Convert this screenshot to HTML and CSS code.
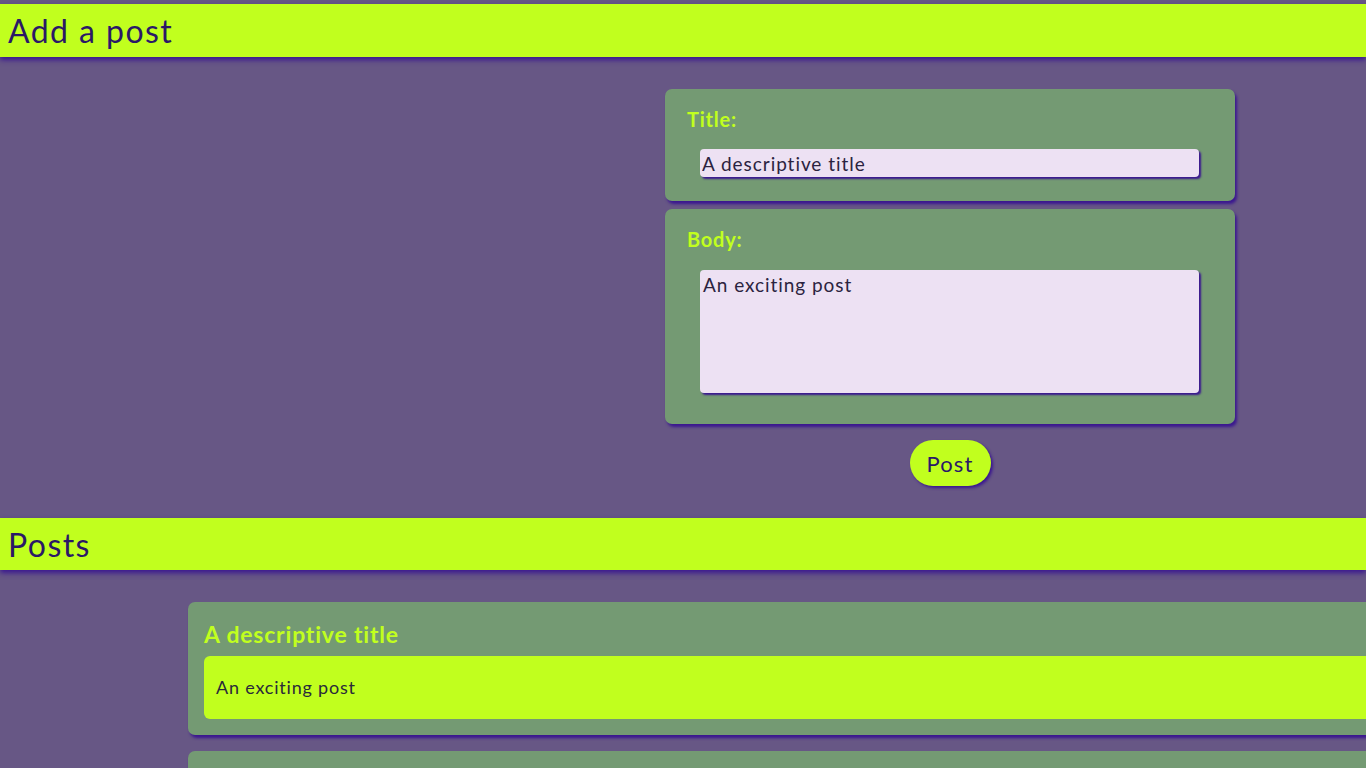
FILE: index.html
```html
<!DOCTYPE html>
<html lang="en">
<head>
<meta charset="utf-8">
<title>Posts</title>
<link rel="stylesheet" href="styles.css">
</head>
<body>
<header class="bar bar-first"><h1 class="bar-title">Add a post</h1></header>
<main>
  <form class="post-form">
    <div class="field-card">
      <label class="field-label" for="title">Title:</label>
      <input class="field-input" id="title" type="text" value="A descriptive title">
    </div>
    <div class="field-card field-card-body">
      <label class="field-label" for="body">Body:</label>
      <textarea class="field-textarea" id="body">An exciting post</textarea>
    </div>
    <div class="actions"><button class="post-btn" type="button">Post</button></div>
  </form>
  <header class="bar bar-posts"><h1 class="bar-title">Posts</h1></header>
  <section class="posts">
    <article class="post-card">
      <h2 class="post-title">A descriptive title</h2>
      <div class="post-body">An exciting post</div>
    </article>
    <article class="post-card">
      <h2 class="post-title">A descriptive title</h2>
      <div class="post-body">An exciting post</div>
    </article>
  </section>
</main>
</body>
</html>
```
FILE: styles.css
```css
html, body {
  margin: 0;
  padding: 0;
  overflow: hidden;
}
body {
  background: #675785;
  font-family: "Lato", "Open Sans", sans-serif;
  letter-spacing: 0.05em;
  color: #2b1867;
}
.bar {
  background: #c1ff1e;
  height: 53px;
  display: flex;
  align-items: center;
  padding-left: 8px;
  box-shadow: 0 3px 5px #3a1790;
}
.bar-first { margin-top: 4px; }
.bar-posts { height: 52px; }
.bar-title {
  margin: 0;
  font-size: 32px;
  font-weight: 400;
  letter-spacing: 0.045em;
  color: #2b1867;
}
.post-form {
  margin: 32px 0 32px 665px;
  width: 570px;
}
.field-card {
  background: #749a73;
  border-radius: 7px;
  padding: 18px 22px 24px;
  box-shadow: 2px 3px 3px #3a1790;
}
.field-card-body {
  margin-top: 8px;
  padding-bottom: 31px;
}
.field-label {
  display: block;
  font-size: 20px;
  line-height: 24px;
  font-weight: 700;
  color: #c1ff1e;
}
.field-input, .field-textarea {
  display: block;
  box-sizing: border-box;
  margin: 18px 0 0 13px;
  width: 499px;
  border: none;
  border-radius: 4px;
  background: #ede1f3;
  color: #2b2340;
  font-family: inherit;
  letter-spacing: 0.05em;
  font-size: 19px;
  box-shadow: 2px 2px 2px #3a1790;
  outline: none;
}
.field-input {
  height: 28px;
  padding: 0 2px;
}
.field-textarea {
  margin-top: 19px;
  height: 123px;
  padding: 3px 3px;
  resize: none;
}
.actions {
  display: flex;
  justify-content: center;
  margin-top: 16px;
}
.post-btn {
  width: 81px;
  height: 46px;
  border: none;
  border-radius: 23px;
  background: #c1ff1e;
  color: #2b1867;
  font-family: inherit;
  letter-spacing: 0.05em;
  font-size: 22px;
  box-shadow: 2px 2px 3px #3a1790;
  padding: 0;
}
.posts {
  padding: 32px 0 0 188px;
}
.post-card {
  width: 1300px;
  background: #749a73;
  border-radius: 7px;
  padding: 16px;
  margin-bottom: 16px;
  box-shadow: 2px 3px 3px #3a1790;
}
.post-title {
  margin: 0 0 6px;
  font-size: 23px;
  line-height: 32px;
  font-weight: 700;
  color: #c1ff1e;
}
.post-body {
  background: #c1ff1e;
  border-radius: 6px;
  height: 63px;
  line-height: 63px;
  padding: 0 12px;
  font-size: 18px;
  color: #2a2a3a;
}
```
